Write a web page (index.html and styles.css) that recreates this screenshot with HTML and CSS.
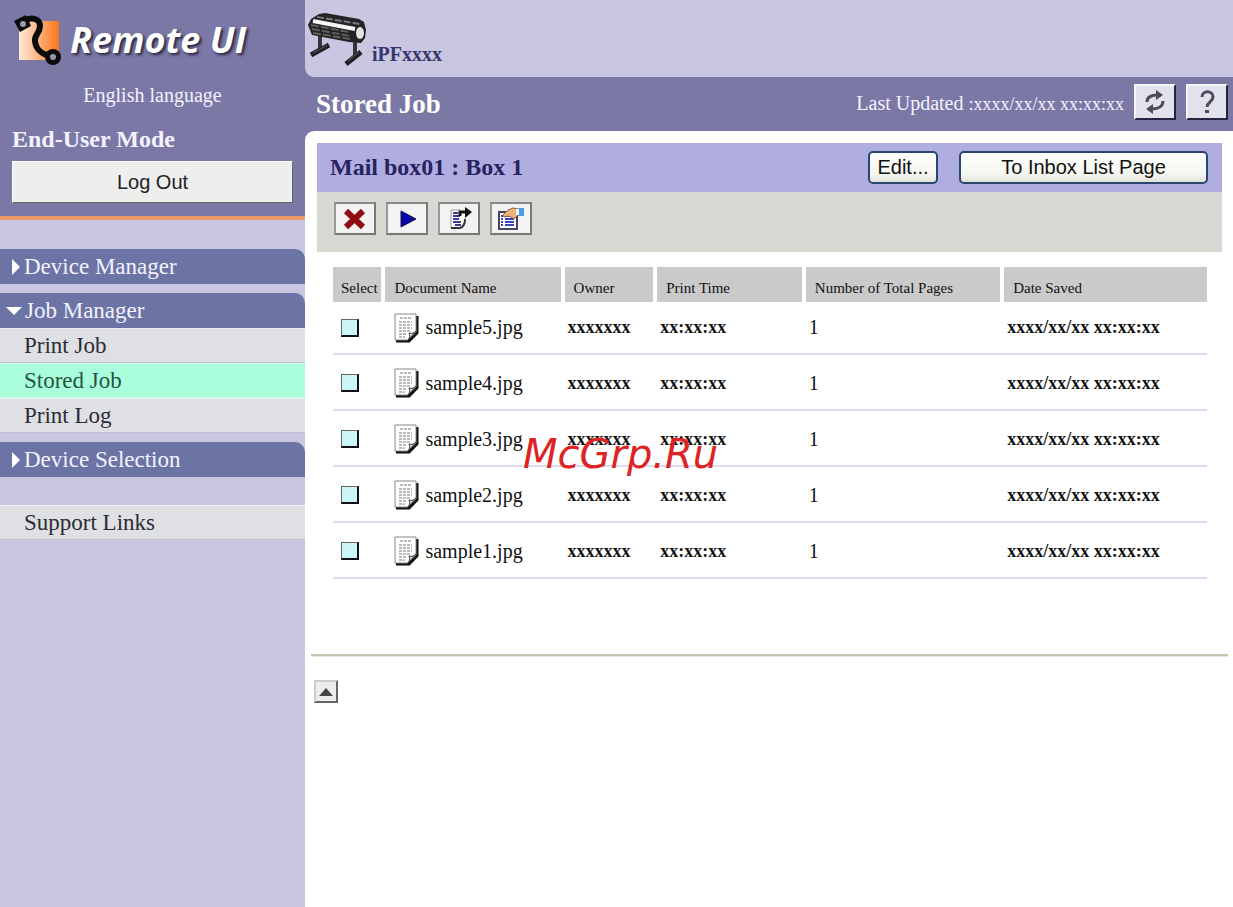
FILE: index.html
```html
<!DOCTYPE html>
<html lang="en">
<head>
<meta charset="utf-8">
<title>Remote UI - Stored Job</title>
<link rel="stylesheet" href="styles.css">
</head>
<body>
<svg class="symbols" aria-hidden="true">
  <symbol id="doc" viewBox="0 0 26 30">
    <path d="M2 28h13l8-8V3" fill="none" stroke="#111" stroke-width="3"/>
    <path d="M1 1h21v18l-8 8H1z" fill="#fff" stroke="#888" stroke-width="1"/>
    <path d="M14 27c2-2 2-5 1-7 3 1 5 0 7-2z" fill="#eee" stroke="#333"/>
    <path d="M6 5h12M5 9h13M5 12h13M5 15h13M5 18h11M5 21h8M5 24h6" stroke="#777" stroke-dasharray="3 1"/>
  </symbol>
</svg>
<div class="app">
  <aside class="sidebar">
    <div class="brand">
      <div class="logo">
        <svg width="50" height="52" viewBox="0 0 50 52" aria-hidden="true">
          <defs><linearGradient id="glow"><stop offset="0" stop-color="#ffeadb"/><stop offset="0.5" stop-color="#ffb27c"/><stop offset="1" stop-color="#f9741c"/></linearGradient></defs>
          <path d="M5 8h40v39H5z" fill="url(#glow)"/>
          <path d="M10 8C18 3 26 6 26 13C26 20 20 22 21 28C22 38 29 42 40 44" fill="none" stroke="#0b0b0b" stroke-width="6"/>
          <path d="M0 8L12 2l5 11L6 19z" fill="#0b0b0b"/><circle cx="9" cy="11" r="3" fill="#9a9aa8"/>
          <circle cx="39" cy="44" r="8" fill="#0b0b0b"/><circle cx="39" cy="44" r="3" fill="#9a9aa8"/>
        </svg>
        <span>Remote UI</span>
      </div>
      <div class="lang">English language</div>
      <div class="mode">End-User Mode</div>
      <button class="logout" type="button">Log Out</button>
    </div>
    <nav class="menu">
      <a class="group" href="#"><i class="tri right"></i>Device Manager</a>
      <div class="section">
        <a class="group" href="#"><i class="tri down"></i>Job Manager</a>
        <a class="item" href="#">Print Job</a>
        <a class="item active" href="#">Stored Job</a>
        <a class="item" href="#">Print Log</a>
      </div>
      <a class="group" href="#"><i class="tri right"></i>Device Selection</a>
      <a class="item support" href="#">Support Links</a>
    </nav>
  </aside>
  <main class="main">
    <header class="device">
      <svg width="58" height="54" viewBox="0 0 58 54" aria-hidden="true">
        <path d="M12 20v16M47 27v17" stroke="#34363c" stroke-width="4"/>
        <path d="M3 42l18-10M38 51l15-12" stroke="#202126" stroke-width="5"/>
        <path d="M5 40l14-8M40 48l11-9" stroke="#5b5d64" stroke-width="1"/>
        <path d="M0 12L3 6l8-5 6-1 34 6 5 3 2 8-1 8-4 5-12-1L4 22z" fill="#242426"/>
        <path d="M9 4l43 7" stroke="#77787a" stroke-width="2" stroke-dasharray="7 2"/>
        <path d="M5 8l42 8" stroke="#f6f6f6" stroke-width="4"/>
        <path d="M3 12l38 7M4 16l38 7M5 20l37 6" stroke="#5e5f61" stroke-width="2" stroke-dasharray="8 2"/>
        <ellipse cx="52" cy="20" rx="4" ry="6" fill="#e4e4e4"/>
      </svg>
      <span>iPFxxxx</span>
    </header>
    <div class="titlebar">
      <h1>Stored Job</h1>
      <span class="updated">Last Updated <span class="stamp">:xxxx/xx/xx xx:xx:xx</span></span>
      <button class="square" type="button" aria-label="Refresh">
        <svg width="24" height="26" viewBox="0 0 24 26" aria-hidden="true">
          <path d="M4 13C4 8 8 6 15 6M20 12c0 5-4 8-11 8" fill="none" stroke="#4c4c5e" stroke-width="3"/>
          <path d="M13 1l7 5-7 5zM10 15l-7 5 7 5z" fill="#4c4c5e"/>
        </svg>
      </button>
      <button class="square" type="button" aria-label="Help">
        <svg width="20" height="26" viewBox="0 0 20 26" aria-hidden="true">
          <path d="M5 8C5 1 16 1 16 8c0 5-6 5-6 10" fill="none" stroke="#4c4c5e" stroke-width="3"/><path d="M8 21h4v3H8z" fill="#4c4c5e"/>
        </svg>
      </button>
    </div>
    <section class="content">
      <div class="boxhead">
        <h2>Mail box01 : Box 1</h2>
        <button class="xp" type="button">Edit...</button>
        <button class="xp wide" type="button">To Inbox List Page</button>
      </div>
      <div class="toolbar">
        <button class="tool" type="button" aria-label="Delete">
          <svg width="28" height="24" viewBox="0 0 28 24" aria-hidden="true"><path d="M5 4l17 16M22 4L5 20" stroke="#900c10" stroke-width="6"/></svg>
        </button>
        <button class="tool" type="button" aria-label="Print">
          <svg width="28" height="24" viewBox="0 0 28 24" aria-hidden="true"><path d="M8 4l15 8-15 8z" fill="#0808a8" stroke="#101050"/></svg>
        </button>
        <button class="tool" type="button" aria-label="Move">
          <svg width="28" height="24" viewBox="0 0 28 24" aria-hidden="true">
            <path d="M15 3H6v18h10l4-4V3z" fill="#fff"/><path d="M15 3H6v18" fill="none" stroke="#99a"/>
            <path d="M6 21h9c3-1 5-4 5-9" fill="none" stroke="#333" stroke-width="2"/>
            <path d="M8 6h5M8 9h7M8 12h6M8 15h8M10 18h6" stroke="#3b3890" stroke-width="2"/>
            <path d="M15 9V5h6" fill="none" stroke="#111" stroke-width="3"/><path d="M20 0l7 5-7 6z" fill="#111"/>
          </svg>
        </button>
        <button class="tool" type="button" aria-label="Properties">
          <svg width="28" height="24" viewBox="0 0 28 24" aria-hidden="true">
            <path d="M2 5h18v17H2z" fill="#fff" stroke="#444466" stroke-width="2"/>
            <path d="M4 9h2M4 12h2M4 15h2M4 18h2M8 9h9M8 12h9M8 15h9M8 18h9" stroke="#3444bc" stroke-width="2"/>
            <path d="M6 8l5-5 5-2 5 1v6l-4 4-3-2-3-1-4 1z" fill="#edb478" stroke="#936044"/><path d="M21 1h6v8h-6z" fill="#4b9ae8"/><path d="M19 2h3v6h-3z" fill="#e9f2ff"/>
          </svg>
        </button>
      </div>
      <div class="tablewrap">
        <table>
          <colgroup><col class="c1"><col class="c2"><col class="c3"><col class="c4"><col class="c5"><col class="c6"></colgroup>
          <thead><tr><th>Select</th><th>Document Name</th><th>Owner</th><th>Print Time</th><th>Number of Total Pages</th><th>Date Saved</th></tr></thead>
          <tbody>
            <tr><td><input type="checkbox" aria-label="Select sample5.jpg"></td><td><span class="file"><svg width="26" height="30" aria-hidden="true"><use href="#doc"/></svg>sample5.jpg</span></td><td class="x">xxxxxxx</td><td class="x">xx:xx:xx</td><td>1</td><td class="x">xxxx/xx/xx xx:xx:xx</td></tr>
            <tr><td><input type="checkbox" aria-label="Select sample4.jpg"></td><td><span class="file"><svg width="26" height="30" aria-hidden="true"><use href="#doc"/></svg>sample4.jpg</span></td><td class="x">xxxxxxx</td><td class="x">xx:xx:xx</td><td>1</td><td class="x">xxxx/xx/xx xx:xx:xx</td></tr>
            <tr><td><input type="checkbox" aria-label="Select sample3.jpg"></td><td><span class="file"><svg width="26" height="30" aria-hidden="true"><use href="#doc"/></svg>sample3.jpg</span></td><td class="x">xxxxxxx</td><td class="x">xx:xx:xx</td><td>1</td><td class="x">xxxx/xx/xx xx:xx:xx</td></tr>
            <tr><td><input type="checkbox" aria-label="Select sample2.jpg"></td><td><span class="file"><svg width="26" height="30" aria-hidden="true"><use href="#doc"/></svg>sample2.jpg</span></td><td class="x">xxxxxxx</td><td class="x">xx:xx:xx</td><td>1</td><td class="x">xxxx/xx/xx xx:xx:xx</td></tr>
            <tr><td><input type="checkbox" aria-label="Select sample1.jpg"></td><td><span class="file"><svg width="26" height="30" aria-hidden="true"><use href="#doc"/></svg>sample1.jpg</span></td><td class="x">xxxxxxx</td><td class="x">xx:xx:xx</td><td>1</td><td class="x">xxxx/xx/xx xx:xx:xx</td></tr>
          </tbody>
        </table>
        <span class="watermark">McGrp.Ru</span>
      </div>
      <hr>
      <button class="top" type="button" aria-label="Back to top"><svg width="14" height="8" viewBox="0 0 14 8" aria-hidden="true"><path d="M7 0l7 8H0z" fill="#444"/></svg></button>
    </section>
  </main>
</div>
</body>
</html>
```
FILE: styles.css
```css
* { box-sizing: border-box; }
body { margin: 0; font-family: "Liberation Serif", serif; font-size: 20px; color: #111; }
button { font-family: "Liberation Sans", sans-serif; font-size: 20px; color: #222; padding: 0; }
svg { display: block; flex: none; }
a { text-decoration: none; }
.symbols { position: absolute; width: 0; height: 0; }
.app { display: grid; grid-template-columns: 305px 1fr; min-height: 100vh; background: #7b78a6; }

.sidebar { background: #c8c6e1; }
.brand { background: #7b78a6; border-bottom: 4px solid #ee986c; padding: 13px 12px; display: flex; flex-direction: column; height: 220px; color: #f4f2ff; }
.logo { display: flex; align-items: center; gap: 6px; height: 52px; padding-left: 2px; font: italic bold 36px "Open Sans", sans-serif; color: #fff; text-shadow: 2px 2px 3px #26243f; white-space: nowrap; }
.lang { margin-top: 18px; line-height: 24px; text-align: center; }
.mode { margin-top: 18px; line-height: 28px; font-size: 24px; font-weight: bold; }
.logout { margin-top: 8px; height: 42px; flex: none; background: #eeeeed; border: 1px solid #fff; border-right-color: #666; border-bottom-color: #666; }

.menu { padding-top: 29px; display: flex; flex-direction: column; gap: 9px; font-size: 23px; line-height: 34px; }
.section { display: flex; flex-direction: column; }
.group { display: flex; align-items: center; height: 35px; background: #6c74a5; color: #f3f2ff; border-radius: 0 10px 0 0; }
.tri { flex: none; width: 0; height: 0; border: 0 solid transparent; }
.right { margin: 0 4px 0 12px; border-width: 8px 0 8px 8px; border-left-color: #fff; }
.down { margin: 0 3px 0 6px; border-width: 8px 8px 0; border-top-color: #fff; }
.item { height: 35px; padding-left: 24px; background: #dee0e3; color: #2b2b36; border-top: 1px solid #eceef2; border-bottom: 1px solid #bfc0ce; }
.active { background: #a9ffdc; border-color: #c9ffea; color: #25533f; }
.support { margin-top: 19px; }

.main { display: flex; flex-direction: column; min-width: 0; }
.device { height: 77px; display: flex; align-items: flex-end; gap: 6px; padding: 0 3px 10px; background: #c8c6e1; border-radius: 0 0 0 9px; color: #39356f; font-size: 20px; font-weight: bold; line-height: 26px; }
.titlebar { height: 54px; display: flex; align-items: center; padding: 0 5px 4px 11px; gap: 10px; color: #f4f2ff; }
h1 { margin: 0; padding-top: 4px; font-size: 27px; flex: 1; color: #fff; }
.updated { white-space: nowrap; padding-top: 2px; }
.stamp { font-size: 18px; }
.square { width: 42px; height: 36px; flex: none; display: grid; place-items: center; background: #e2e2ec; border: 2px solid #f6f6fa; border-right-color: #25233f; border-bottom-color: #25233f; }

.content { flex: 1; background: #fff; border-radius: 9px 0 0 0; padding-top: 12px; }
.boxhead { height: 49px; margin: 0 11px 0 12px; padding: 0 14px 0 13px; background: #b0aee0; display: flex; align-items: center; gap: 21px; }
h2 { margin: 0; flex: 1; font-size: 24px; color: #282260; }
.xp { width: 70px; height: 33px; flex: none; border: 2px solid #28476f; border-radius: 5px; background: linear-gradient(#fff, #f5f5f0 75%, #e2e0d8); color: #111; }
.wide { width: 249px; }
.toolbar { height: 60px; margin: 0 11px 0 12px; padding: 10px 17px; display: flex; gap: 10px; background: #d6d9d1; }
.tool { width: 42px; height: 33px; display: grid; place-items: center; background: #f3f3f3; border: 2px solid #777; border-left-color: #999; border-top-color: #888; }

.tablewrap { position: relative; margin: 15px 26px 0 28px; }
table { width: 100%; table-layout: fixed; border-collapse: separate; border-spacing: 0; }
.c1 { width: 6%; } .c2 { width: 20.5%; } .c3 { width: 10.6%; } .c4 { width: 17%; } .c5 { width: 22.7%; }
th { height: 35px; padding: 8px 0 0 9px; background: #cacaca; background-clip: padding-box; border-right: 4px solid #fff; text-align: left; font-size: 15px; font-weight: normal; white-space: nowrap; }
th:first-child { padding-left: 8px; }
th:last-child { border-right: 0; }
td { height: 56px; padding: 2px 0 0 3px; border-bottom: 2px solid #dcdaf2; white-space: nowrap; }
tbody tr:first-child td { height: 53px; padding-top: 0; }
td:first-child { padding-left: 8px; }
td:nth-child(2) { padding-left: 9px; }
.x { font-size: 18px; font-weight: bold; }
.file { display: flex; align-items: center; gap: 5px; }
input { appearance: none; display: block; width: 18px; height: 18px; margin: 0; background: #ccf5f7; border: 1px solid #666; border-right: 2px solid #111; border-bottom: 2px solid #111; }
.watermark { position: absolute; left: 190px; top: 164px; font: italic 40px/46px "DejaVu Sans", sans-serif; color: #dd2424; pointer-events: none; }
hr { margin: 75px 5px 0 6px; border: 0; height: 3px; background: #c3c3ae; border-bottom: 1px solid #e7e7dc; }
.top { margin: 23px 0 0 9px; width: 24px; height: 23px; display: grid; place-items: center; background: #ececec; border: 2px solid #ccc; border-right-color: #666; border-bottom-color: #666; }
```
